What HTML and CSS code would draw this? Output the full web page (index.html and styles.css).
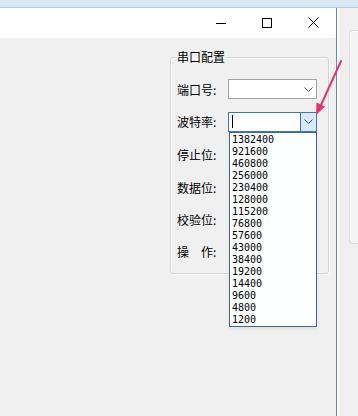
FILE: index.html
```html
<!DOCTYPE html>
<html lang="zh-CN">
<head>
    <meta charset="UTF-8">
    <meta name="viewport" content="width=device-width, initial-scale=1.0">
    <title>串口配置</title>
    <link rel="stylesheet" href="styles.css">
</head>
<body>
    <div class="screen">
        <div class="top-strip"></div>

        <div class="main">
            <div class="window">
                <div class="title-bar">
                    <div class="caption-btn">
                        <svg width="10" height="10" viewBox="0 0 10 10"><path d="M0 5.5h10" stroke="#000" stroke-width="1"/></svg>
                    </div>
                    <div class="caption-btn">
                        <svg width="10" height="10" viewBox="0 0 10 10"><rect x="0.5" y="0.5" width="9" height="9" fill="none" stroke="#000" stroke-width="1"/></svg>
                    </div>
                    <div class="caption-btn">
                        <svg width="11" height="11" viewBox="0 0 11 11"><path d="M0.5 0.5l10 10M10.5 0.5l-10 10" stroke="#000" stroke-width="1"/></svg>
                    </div>
                </div>

                <div class="client">
                    <fieldset class="group">
                        <legend>串口配置</legend>
                        <div class="rows">
                            <div class="row">
                                <span class="label">端口号:</span>
                                <div class="combo">
                                    <span class="combo-text"></span>
                                    <span class="combo-btn">
                                        <svg width="9" height="5" viewBox="0 0 9 5"><path d="M0.5 0.5l4 4 4-4" fill="none" stroke="#555" stroke-width="1"/></svg>
                                    </span>
                                </div>
                            </div>
                            <div class="row">
                                <span class="label">波特率:</span>
                                <div class="combo focused">
                                    <span class="combo-text"><span class="caret"></span></span>
                                    <span class="combo-btn">
                                        <svg width="9" height="5" viewBox="0 0 9 5"><path d="M0.5 0.5l4 4 4-4" fill="none" stroke="#2d4f6e" stroke-width="1"/></svg>
                                    </span>
                                    <ul class="drop-list">
                                        <li>1382400</li>
                                        <li>921600</li>
                                        <li>460800</li>
                                        <li>256000</li>
                                        <li>230400</li>
                                        <li>128000</li>
                                        <li>115200</li>
                                        <li>76800</li>
                                        <li>57600</li>
                                        <li>43000</li>
                                        <li>38400</li>
                                        <li>19200</li>
                                        <li>14400</li>
                                        <li>9600</li>
                                        <li>4800</li>
                                        <li>1200</li>
                                    </ul>
                                </div>
                            </div>
                            <div class="row"><span class="label">停止位:</span></div>
                            <div class="row"><span class="label">数据位:</span></div>
                            <div class="row"><span class="label">校验位:</span></div>
                            <div class="row"><span class="label">操　作:</span></div>
                        </div>
                    </fieldset>
                </div>
            </div>

            <div class="behind">
                <div class="behind-panel"></div>
            </div>
        </div>

        <!-- annotation arrow drawn on top of the screenshot -->
        <svg class="arrow" width="358" height="416" viewBox="0 0 358 416">
            <path d="M341 61L321 105" stroke="#e4356e" stroke-width="2" stroke-linecap="round"/>
            <polygon points="316,115 325,106.5 316.5,102.5" fill="#e4356e"/>
        </svg>
    </div>
</body>
</html>
```

FILE: styles.css
```css
body {
    margin: 0;
    padding: 0;
    font-family: "Noto Sans CJK SC", "Liberation Sans", sans-serif;
    font-size: 12px;
    color: #000;
    background: #f0f0f0;
}

.screen {
    position: relative;
    width: 358px;
    height: 416px;
    overflow: hidden;
}

.top-strip {
    height: 7px;
    background: #dbe7f3;
    border-bottom: 1px solid #afc9e5;
}

.main {
    display: flex;
    height: 408px;
}

.window {
    width: 336px;
    border-right: 1px solid #5b8fcb;
    display: flex;
    flex-direction: column;
}

.title-bar {
    height: 30px;
    background: #fff;
    display: flex;
    justify-content: flex-end;
}

.caption-btn {
    width: 46px;
    display: flex;
    align-items: center;
    justify-content: center;
    padding-bottom: 1px;
}

.client {
    flex: 1;
    background: #f0f0f0;
    padding-top: 12px;
}

.group {
    margin: 0 0 0 170px;
    width: 153px;
    padding: 0 0 6px 4px;
    border: 1px solid #d5d5d5;
    border-radius: 3px;
    box-shadow: inset 1px 1px 0 #fff, 1px 1px 0 #fbfbfb;
}

.group legend {
    padding: 0 2px;
    line-height: 14px;
}

.rows {
    margin-top: 9px;
    padding-left: 2px;
}

.row {
    height: 32px;
    display: flex;
    align-items: center;
}

.row:nth-child(2),
.row:nth-child(3) {
    height: 33px;
}

.label {
    width: 51px;
    white-space: nowrap;
}

.combo {
    position: relative;
    width: 87px;
    height: 18px;
    border: 1px solid #a3a3a3;
    background: #fff;
    display: flex;
}

.combo-text {
    flex: 1;
    display: flex;
    align-items: center;
    padding-left: 3px;
}

.combo-btn {
    width: 15px;
    display: flex;
    align-items: center;
    justify-content: center;
}

.combo.focused {
    border-color: #3b7bb3;
}

.combo.focused .combo-btn {
    background: #d8eaf9;
    border-left: 1px solid #3b7bb3;
}

.caret {
    width: 1px;
    height: 13px;
    background: #000;
}

.drop-list {
    position: absolute;
    left: 0;
    top: 19px;
    width: 86px;
    margin: 0;
    padding: 1px 0 0 0;
    list-style: none;
    background: #fcfeff;
    border: 1px solid #3c6894;
    box-shadow: 0 2px 3px rgba(200, 170, 140, 0.25);
    font-family: "DejaVu Sans Mono", monospace;
    font-size: 10px;
}

.drop-list li {
    height: 12px;
    line-height: 12px;
    padding-left: 2px;
}

.behind {
    flex: 1;
    background: #f0f0f0;
    box-shadow: inset 3px 0 0 #fafafa, inset 6px 0 0 #f6ece3;
    padding-top: 22px;
}

.behind-panel {
    margin-left: 12px;
    height: 212px;
    border: 1px solid #dadada;
    border-right: none;
    border-radius: 3px 0 0 3px;
    background: #f3f3f3;
    box-shadow: inset 1px 1px 0 #fff;
}

.arrow {
    position: absolute;
    left: 0;
    top: 0;
    pointer-events: none;
}
```
